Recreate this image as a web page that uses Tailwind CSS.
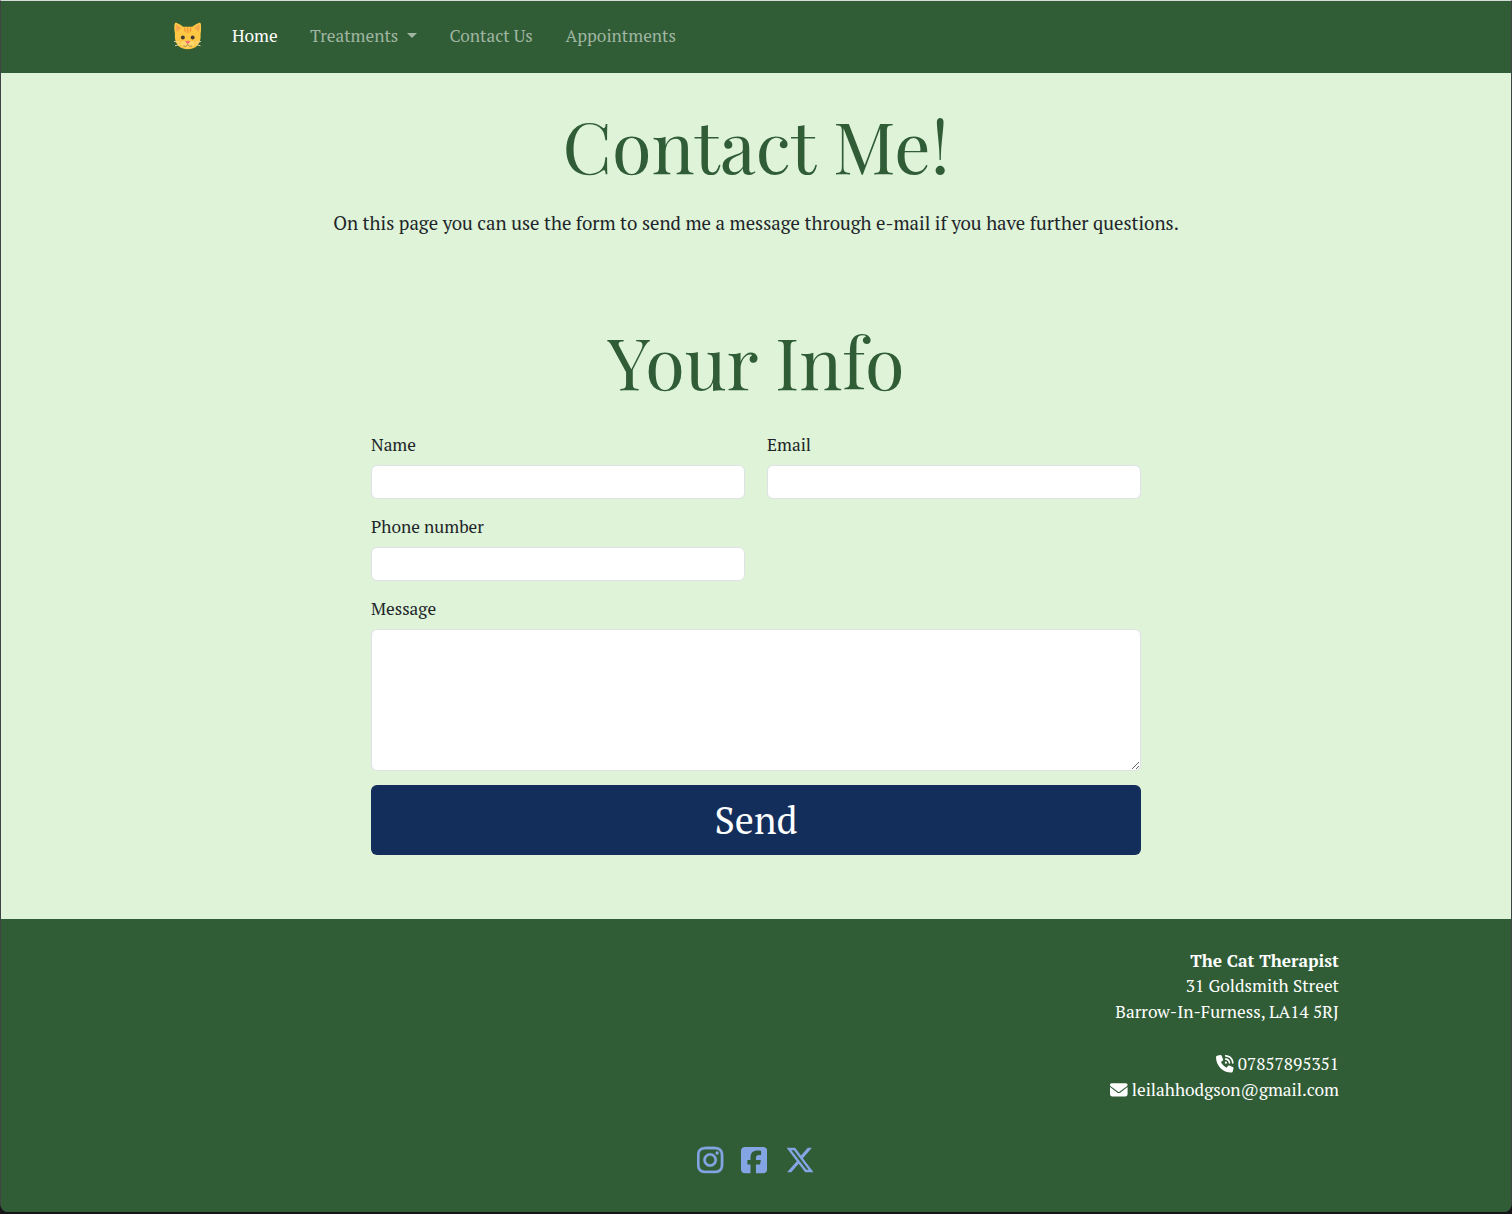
<!DOCTYPE html>
<html lang="en">
<head>
<meta charset="utf-8">
<title>The Cat Therapist</title>
<script src="https://cdn.jsdelivr.net/npm/@tailwindcss/browser@4"></script>
</head>
<body class="h-[1214px] w-[1512px] overflow-hidden bg-[#171517] font-['PT_Serif','Liberation_Serif',serif] text-[17.28px] leading-[26px] text-[#212529]">
<div class="flex h-[1212px] flex-col overflow-hidden rounded-b-[8px] border-x border-t border-x-[#414542] border-t-[#d5ddd6] bg-[#305d36]">
  <nav class="flex h-[72px] shrink-0 items-center bg-[#305d36] pb-[3px] pl-[172.500px] text-[#a0b5a2]">
    <a href="#" class="mr-[31px] mt-[1px] block h-7 w-[27.500px]">
      <svg viewBox="0 0 28 28" class="h-7 w-[27.500px]">
        <path d="M1 12 C0 7 0 1 1.500 .5 C3 0 7 3 9.500 4.500 H18.500 C21 3 25 0 26.500 .5 C28 1 28 7 27 12 C28 21 23 27.500 14 27.500 S0 21 1 12Z" fill="#ffc844"/>
        <path d="M2 2 L7.500 5.500 L3 10 C2 8 1.500 4 2 2Z M26 2 L20.500 5.500 L25 10 C26 8 26.500 4 26 2Z" fill="#f5a84e"/>
        <path d="M14 5.500V10.500 M10.800 6L11.500 9.500 M17.200 6L16.500 9.500" stroke="#f39336" stroke-width="1.300" stroke-linecap="round"/>
        <path d="M7 22C7 18 12 19 14 20C16 19 21 18 21 22C21 27 7 27 7 22Z" fill="#ffd76b"/>
        <circle cx="9" cy="15.500" r="2" fill="#453b32"/><circle cx="19" cy="15.500" r="2" fill="#453b32"/>
        <path d="M11.800 19.500H16.200L14 22Z" fill="#f35a79" stroke="#f35a79" stroke-width=".6"/>
        <path d="M9.500 24C11.500 25.300 13.500 24 14 22.500C14.500 24 16.500 25.300 18.500 24" stroke="#a77e3f" fill="none"/>
        <path d="M0 19.500L6 20.500M1 24L6 22.500M28 19.500L22 20.500M27 24L22 22.500" stroke="#f5e3a7" stroke-width=".9"/>
      </svg>
    </a>
    <a href="#" class="w-[78px] text-white">Home</a>
    <a href="#" class="flex w-[139.500px] items-center">Treatments<span class="ml-[9px] border-x-[5px] border-t-[5px] border-x-transparent border-t-[#a0b5a2]"></span></a>
    <a href="#" class="w-[116px]">Contact Us</a>
    <a href="#">Appointments</a>
  </nav>
  <main class="flex h-[846px] shrink-0 flex-col items-center bg-[#def3d8]">
    <h1 class="mt-[26px] h-[90px] font-['Playfair_Display','Liberation_Serif',serif] text-[72px] leading-[90px] text-[#305d36]">Contact Me!</h1>
    <p class="mt-[20px] h-[28px] text-[18.720px] leading-[28px]">On this page you can use the form to send me a message through e-mail if you have further questions.</p>
    <h2 class="mt-[78px] h-[90px] font-['Playfair_Display','Liberation_Serif',serif] text-[72px] leading-[90px] text-[#305d36]">Your Info</h2>
    <form class="mt-[27px] grid w-[770px] grid-cols-2 gap-x-[22px]">
      <label class="block h-[82px]">Name<input class="mt-[7px] block h-[34px] w-full rounded-[6px] border border-[#dee2e6] bg-white"></label>
      <label class="block h-[82px]">Email<input class="mt-[7px] block h-[34px] w-full rounded-[6px] border border-[#dee2e6] bg-white"></label>
      <label class="block h-[82px]">Phone number<input class="mt-[7px] block h-[34px] w-full rounded-[6px] border border-[#dee2e6] bg-white"></label>
      <label class="col-span-2 block">Message<textarea class="mt-[7px] block h-[142px] w-full resize-y rounded-[6px] border border-[#dee2e6] bg-white"></textarea></label>
      <button type="button" class="col-span-2 mt-[14px] h-[70px] rounded-[6px] bg-[#142e5c] text-[38px] leading-[58px] text-white">Send</button>
    </form>
  </main>
  <footer class="flex flex-1 flex-col bg-[#305d36] pt-[29px] text-white">
    <address class="mr-[172px] flex flex-col items-end not-italic">
      <strong class="h-[25px]">The Cat Therapist</strong>
      <span class="h-[26px]">31 Goldsmith Street</span>
      <span class="h-[52px]">Barrow-In-Furness, LA14 5RJ</span>
      <span class="flex h-[26px] items-center"><svg viewBox="0 0 512 512" class="mr-1 h-[17.600px] w-[17.600px]" fill="white"><path d="M280 0C408.100 0 512 103.900 512 232c0 13.300-10.700 24-24 24s-24-10.700-24-24c0-101.600-82.400-184-184-184c-13.300 0-24-10.700-24-24s10.700-24 24-24zm8 192a32 32 0 1 1 0 64 32 32 0 1 1 0-64zm-32-72c0-13.300 10.700-24 24-24c75.100 0 136 60.900 136 136c0 13.300-10.700 24-24 24s-24-10.700-24-24c0-48.600-39.400-88-88-88c-13.300 0-24-10.700-24-24zM117.500 1.400c19.400-5.300 39.700 4.600 47.400 23.200l40 96c6.800 16.300 2.100 35.200-11.600 46.300L144 207.300c33.300 70.400 90.300 127.400 160.700 160.700L345 318.700c11.200-13.700 30-18.400 46.300-11.600l96 40c18.600 7.700 28.500 28 23.200 47.400l-24 88C481.800 499.900 466 512 448 512C200.600 512 0 311.400 0 64C0 46 12.100 30.200 29.500 25.400l88-24z"/></svg>07857895351</span>
      <span class="flex h-[26px] items-center"><svg viewBox="0 0 512 512" class="mr-1 h-[17.600px] w-[17.600px]" fill="white"><path d="M48 64C21.500 64 0 85.500 0 112c0 15.100 7.100 29.300 19.200 38.400L236.800 313.600c11.400 8.500 27 8.500 38.400 0L492.800 150.400c12.100-9.100 19.200-23.300 19.200-38.400c0-26.500-21.500-48-48-48H48zM0 176V384c0 35.300 28.700 64 64 64H448c35.300 0 64-28.700 64-64V176L294.400 339.200c-22.800 17.100-54 17.100-76.800 0L0 176z"/></svg>leilahhodgson@gmail.com</span>
    </address>
    <div class="mt-[42px] flex justify-center gap-[17.500px] text-[#84a5e3]">
      <svg viewBox="0 0 448 512" class="h-[30px] w-[26.250px]" fill="currentColor" stroke="currentColor" stroke-width="6"><path d="M224.100 141c-63.600 0-114.900 51.300-114.900 114.900s51.300 114.900 114.900 114.900S339 319.500 339 255.900 287.700 141 224.100 141zm0 189.600c-41.100 0-74.700-33.500-74.700-74.700s33.500-74.700 74.700-74.700 74.700 33.500 74.700 74.700-33.600 74.700-74.700 74.700zm146.400-194.300c0 14.900-12 26.800-26.800 26.800-14.900 0-26.800-12-26.800-26.800s12-26.800 26.800-26.800 26.800 12 26.800 26.800zm76.100 27.200c-1.700-35.900-9.900-67.700-36.200-93.900-26.200-26.200-58-34.400-93.900-36.200-37-2.100-147.900-2.100-184.900 0-35.800 1.700-67.600 9.900-93.900 36.100s-34.400 58-36.200 93.900c-2.100 37-2.100 147.900 0 184.900 1.700 35.900 9.900 67.700 36.200 93.900s58 34.400 93.900 36.200c37 2.100 147.900 2.100 184.900 0 35.900-1.700 67.700-9.900 93.900-36.200 26.200-26.200 34.400-58 36.200-93.900 2.100-37 2.100-147.800 0-184.800zM398.800 388c-7.800 19.600-22.900 34.700-42.600 42.600-29.500 11.700-99.500 9-132.100 9s-102.700 2.600-132.100-9c-19.600-7.800-34.700-22.900-42.600-42.600-11.700-29.500-9-99.500-9-132.100s-2.600-102.700 9-132.100c7.800-19.600 22.900-34.700 42.600-42.600 29.500-11.700 99.500-9 132.100-9s102.700-2.600 132.100 9c19.600 7.800 34.700 22.900 42.600 42.600 11.700 29.500 9 99.500 9 132.100s2.700 102.700-9 132.100z"/></svg>
      <svg viewBox="0 0 448 512" class="h-[30px] w-[26.250px]" fill="currentColor"><path d="M64 32C28.700 32 0 60.700 0 96V416c0 35.300 28.700 64 64 64h98.200V334.200H109.400V256h52.800V222.300c0-87.100 39.400-127.500 125-127.500c16.200 0 44.200 3.200 55.700 6.400V172c-6-.6-16.500-1-29.600-1c-42 0-58.200 15.900-58.200 57.200V256h83.600l-14.400 78.200H255V480H384c35.300 0 64-28.700 64-64V96c0-35.300-28.700-64-64-64H64z"/></svg>
      <svg viewBox="0 0 512 512" class="h-[30px] w-[30px]" fill="currentColor"><path d="M389.200 48h70.600L305.600 224.200 487 464H345L233.700 318.600 106.500 464H35.800L200.700 275.500 26.800 48H172.400L272.900 180.900 389.200 48zM364.400 421.800h39.100L151.100 88h-42L364.400 421.800z"/></svg>
    </div>
  </footer>
</div>
</body>
</html>
